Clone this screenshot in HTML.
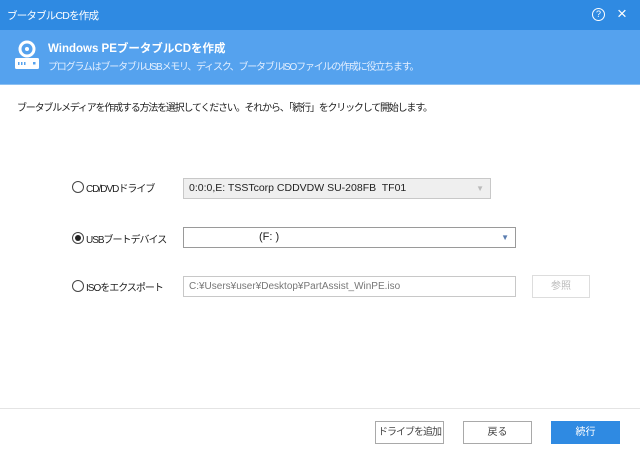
<!DOCTYPE html>
<html><head><meta charset="utf-8"><style>
*{margin:0;padding:0;box-sizing:border-box}
body{width:640px;height:458px;background:#fff;position:relative;overflow:hidden;font-family:"Liberation Sans","Noto Sans CJK JP",sans-serif;font-size:11px;color:#222}
.a{position:absolute;white-space:nowrap}
.title{left:0;top:0;width:640px;height:30px;background:#2f8ae2;color:#fff}
.ban{left:0;top:30px;width:640px;height:55px;background:#55a2ee;color:#fff;border-bottom:1px solid #8cc0f2}
.radio{width:12px;height:12px;border:1px solid #444;border-radius:50%;background:#fff}
.box{border:1px solid #c8c8c8;background:#fff;height:21px;line-height:19px;padding-left:5px}
.btn{height:23px;border:1px solid #a9a9a9;background:#fff;text-align:center;line-height:21px;color:#444}
.lbl{font-size:10px;letter-spacing:-1px}
</style></head><body>
<div class="a title">
 <div class="a" style="left:7px;top:8px;font-size:10.5px;letter-spacing:-0.8px">ブータブルCDを作成</div>
 <div class="a" style="left:592px;top:8px;width:13px;height:13px;border:1.3px solid #fff;border-radius:50%;font-size:9px;text-align:center;line-height:11px">?</div>
 <div class="a" style="left:617px;top:4px;font-size:17px;font-weight:300">×</div>
</div>
<div class="a ban">
 <svg class="a" style="left:14px;top:10px" width="26" height="30" viewBox="0 0 26 30">
  <circle cx="13" cy="9" r="7" fill="none" stroke="#fff" stroke-width="3"/>
  <circle cx="13" cy="9" r="2" fill="#fff"/>
  <rect x="1" y="18" width="24" height="11" rx="1.5" fill="#fff"/>
  <rect x="4" y="22" width="1.5" height="3" fill="#55a2ee"/><rect x="7" y="22" width="1.5" height="3" fill="#55a2ee"/><rect x="10" y="22" width="1.5" height="3" fill="#55a2ee"/>
  <rect x="19" y="22" width="2.5" height="2.5" fill="#55a2ee"/>
 </svg>
 <div class="a" style="left:48px;top:10px;font-weight:bold;font-size:11.5px">Windows PEブータブルCDを作成</div>
 <div class="a" style="left:48px;top:28px;font-size:10px;letter-spacing:-1.2px;color:#e3efff">プログラムはブータブルUSBメモリ、ディスク、ブータブルISOファイルの作成に役立ちます。</div>
</div>
<div class="a" style="left:17px;top:99px;font-size:10px;letter-spacing:-1.2px">ブータブルメディアを作成する方法を選択してください。それから、「続行」をクリックして開始します。</div>

<div class="a radio" style="left:72px;top:181px"></div>
<div class="a lbl" style="left:86px;top:180px">CD/DVDドライブ</div>
<div class="a box" style="left:183px;top:178px;width:308px;background:#efefef;font-size:10.5px">0:0:0,E: TSSTcorp CDDVDW SU-208FB&nbsp; TF01<span class="a" style="right:6px;top:0;color:#bbb;font-size:8px">▼</span></div>

<div class="a radio" style="left:72px;top:232px"><div class="a" style="left:2px;top:2px;width:6px;height:6px;border-radius:50%;background:#222"></div></div>
<div class="a lbl" style="left:86px;top:231px">USBブートデバイス</div>
<div class="a box" style="left:183px;top:227px;width:333px;border-color:#9a9a9a"><span class="a" style="left:75px;top:0">(F: )</span><span class="a" style="right:6px;top:0;color:#5a7db0;font-size:8px">▼</span></div>

<div class="a radio" style="left:72px;top:280px"></div>
<div class="a lbl" style="left:86px;top:279px">ISOをエクスポート</div>
<div class="a box" style="left:183px;top:276px;width:333px;color:#777;font-size:10px">C:¥Users¥user¥Desktop¥PartAssist_WinPE.iso</div>
<div class="a btn" style="left:532px;top:275px;width:58px;border-color:#ddd;color:#bbb;font-size:10px">参照</div>

<div class="a" style="left:0;top:408px;width:640px;height:1px;background:#e4e4e4"></div>
<div class="a btn" style="left:375px;top:421px;width:69px;font-size:10px;letter-spacing:-1px">ドライブを追加</div>
<div class="a btn" style="left:463px;top:421px;width:69px;font-size:10px">戻る</div>
<div class="a btn" style="left:551px;top:421px;width:69px;background:#2f8ae2;border-color:#2f8ae2;color:#fff;font-size:10px">続行</div>
</body></html>
